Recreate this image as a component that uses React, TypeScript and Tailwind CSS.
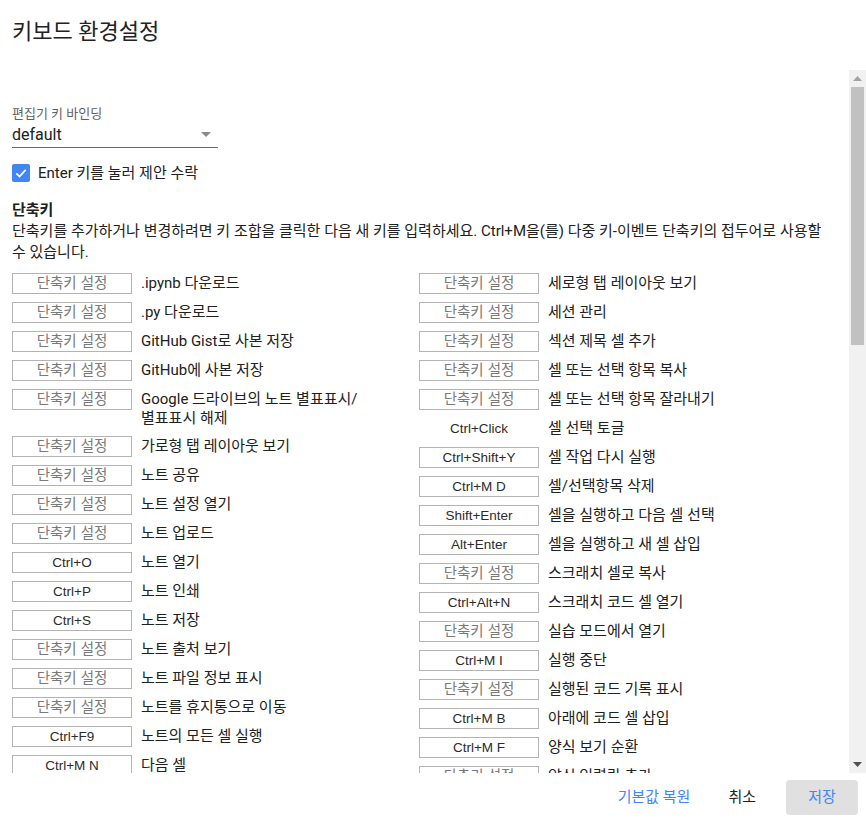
import React from 'react';

// 단축키 목록 - keys 가 없으면 "단축키 설정" 자리표시자를 보여줌
type Shortcut = {
    keys?: string;
    label: React.ReactNode;
    bare?: boolean; // 테두리 없는 키 (Ctrl+Click)
};

const leftShortcuts: Shortcut[] = [
    { label: '.ipynb 다운로드' },
    { label: '.py 다운로드' },
    { label: 'GitHub Gist로 사본 저장' },
    { label: 'GitHub에 사본 저장' },
    { label: <>Google 드라이브의 노트 별표표시/<br />별표표시 해제</> },
    { label: '가로형 탭 레이아웃 보기' },
    { label: '노트 공유' },
    { label: '노트 설정 열기' },
    { label: '노트 업로드' },
    { keys: 'Ctrl+O', label: '노트 열기' },
    { keys: 'Ctrl+P', label: '노트 인쇄' },
    { keys: 'Ctrl+S', label: '노트 저장' },
    { label: '노트 출처 보기' },
    { label: '노트 파일 정보 표시' },
    { label: '노트를 휴지통으로 이동' },
    { keys: 'Ctrl+F9', label: '노트의 모든 셀 실행' },
    { keys: 'Ctrl+M N', label: '다음 셀' },
];

const rightShortcuts: Shortcut[] = [
    { label: '세로형 탭 레이아웃 보기' },
    { label: '세션 관리' },
    { label: '섹션 제목 셀 추가' },
    { label: '셀 또는 선택 항목 복사' },
    { label: '셀 또는 선택 항목 잘라내기' },
    { keys: 'Ctrl+Click', label: '셀 선택 토글', bare: true },
    { keys: 'Ctrl+Shift+Y', label: '셀 작업 다시 실행' },
    { keys: 'Ctrl+M D', label: '셀/선택항목 삭제' },
    { keys: 'Shift+Enter', label: '셀을 실행하고 다음 셀 선택' },
    { keys: 'Alt+Enter', label: '셀을 실행하고 새 셀 삽입' },
    { label: '스크래치 셀로 복사' },
    { keys: 'Ctrl+Alt+N', label: '스크래치 코드 셀 열기' },
    { label: '실습 모드에서 열기' },
    { keys: 'Ctrl+M I', label: '실행 중단' },
    { label: '실행된 코드 기록 표시' },
    { keys: 'Ctrl+M B', label: '아래에 코드 셀 삽입' },
    { keys: 'Ctrl+M F', label: '양식 보기 순환' },
    { label: '양식 입력란 추가' },
];

const ShortcutRow: React.FC<{ item: Shortcut }> = ({ item }) => (
    <div className="flex items-start gap-[9px]">
        <div
            className={`w-[120px] h-[21px] shrink-0 flex items-center justify-center leading-none font-['Liberation_Sans','Noto_Sans_CJK_KR',sans-serif] ${
                item.bare ? '' : 'border border-[#b4b4b4]'
            } ${item.keys ? 'text-[13.5px] text-[#2b2b2b]' : 'text-[14.5px] text-[#7a7a7a]'}`}
        >
            {item.keys ?? '단축키 설정'}
        </div>
        <div className="text-[15px] leading-[19px] text-[#212121] pt-px">{item.label}</div>
    </div>
);

// 오른쪽 스크롤바 (그림)
const FakeScrollbar = () => (
    <div className="w-[17px] shrink-0 bg-[#f1f1f1] flex flex-col items-center">
        <div className="h-[17px] flex items-center justify-center">
            <svg width="9" height="5" viewBox="0 0 9 5">
                <path d="M0 5 L4.5 0 L9 5 Z" fill="#a3a3a3" />
            </svg>
        </div>
        <div className="w-[13px] h-[258px] bg-[#c1c1c1]" />
        <div className="flex-1" />
        <div className="h-[17px] flex items-center justify-center">
            <svg width="9" height="5" viewBox="0 0 9 5">
                <path d="M0 0 L9 0 L4.5 5 Z" fill="#505050" />
            </svg>
        </div>
    </div>
);

export default function App() {
    return (
        <div className="w-[866px] h-[822px] bg-white flex flex-col overflow-hidden font-['Roboto','Noto_Sans_CJK_KR',sans-serif] text-[#212121]">
            {/* 헤더 */}
            <div className="h-[70px] shrink-0 px-3 pt-[16px]">
                <h1 className="text-[22px] leading-[32px] font-normal text-[#222]">키보드 환경설정</h1>
            </div>

            {/* 스크롤 영역 */}
            <div className="h-[703px] shrink-0 flex">
                <div className="flex-1 overflow-hidden pl-3 pr-3 pt-[35px]">
                    <div className="text-[13px] leading-[17px] text-[#5f5f5f]">편집기 키 바인딩</div>
                    <div className="w-[206px] h-[26px] border-b border-[#6b6b6b] flex items-center justify-between pr-[7px]">
                        <span className="text-[16px] leading-[24px] text-[#212121]">default</span>
                        <svg width="10" height="5" viewBox="0 0 10 5">
                            <path d="M0 0 L10 0 L5 5 Z" fill="#8a8a8a" />
                        </svg>
                    </div>

                    <div className="mt-[15px] flex items-center gap-2">
                        <div className="w-[18px] h-[18px] rounded-[2px] bg-[#4285f4] flex items-center justify-center">
                            <svg width="14" height="14" viewBox="0 0 24 24">
                                <path d="M4 12.5 L9.5 18 L20 6.5" fill="none" stroke="white" strokeWidth="3" />
                            </svg>
                        </div>
                        <span className="text-[15px] leading-[20px]">Enter 키를 눌러 제안 수락</span>
                    </div>

                    <div className="mt-[17px] text-[15px] leading-[20px] font-bold">단축키</div>
                    <p className="mt-px text-[15px] leading-[21px] whitespace-nowrap">
                        단축키를 추가하거나 변경하려면 키 조합을 클릭한 다음 새 키를 입력하세요. Ctrl+M을(를) 다중 키-이벤트 단축키의 접두어로 사용할
                        <br />수 있습니다.
                    </p>

                    <div className="mt-[10px] flex">
                        <div className="w-[407px] shrink-0 flex flex-col gap-2">
                            {leftShortcuts.map((s, i) => (
                                <ShortcutRow key={i} item={s} />
                            ))}
                        </div>
                        <div className="flex-1 flex flex-col gap-2">
                            {rightShortcuts.map((s, i) => (
                                <ShortcutRow key={i} item={s} />
                            ))}
                        </div>
                    </div>
                </div>
                <FakeScrollbar />
            </div>

            {/* 하단 버튼 */}
            <div className="flex-1 flex items-center justify-end pr-2 text-[15px]">
                <button className="h-[35px] px-2 text-[#4285f4]">기본값 복원</button>
                <button className="h-[35px] ml-[16px] px-[14px] text-[#212121]">취소</button>
                <button className="h-[35px] w-[72px] ml-[16px] rounded-[4px] bg-[#e0e0e0] text-[#4285f4]">저장</button>
            </div>
        </div>
    );
}
